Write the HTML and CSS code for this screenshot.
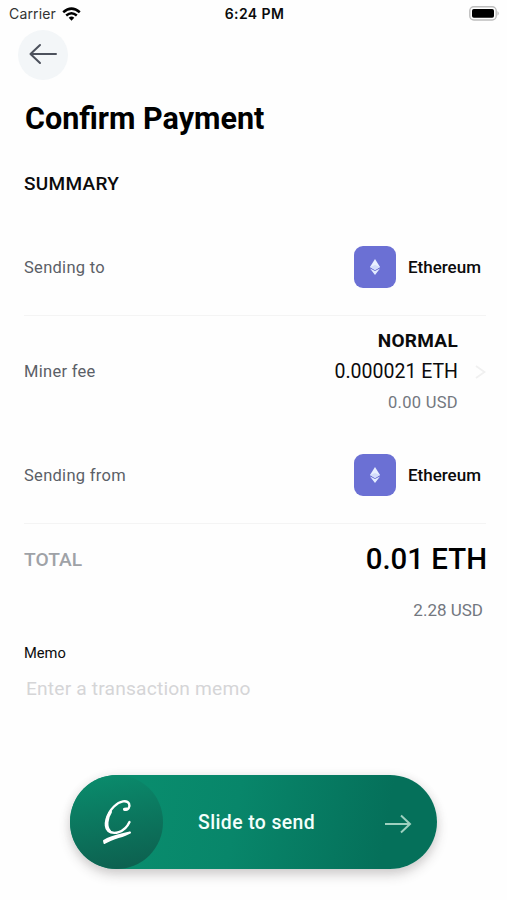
FILE: index.html
```html
<!DOCTYPE html>
<html lang="en">
<head>
<meta charset="utf-8">
<title>Confirm Payment</title>
<link rel="stylesheet" href="styles.css">
</head>
<body>
<header class="status">
  <div class="carrier"><span>Carrier</span>
    <svg class="wifi" width="19" height="14" viewBox="0 0 19 14" fill="none" stroke="#000" stroke-width="2.5"><path d="M1.2 5.2Q9.5-2 17.8 5.2M4.2 8.5Q9.5 4 14.8 8.5"/><path d="M6.7 10.7Q9.5 8.5 12.3 10.7L9.5 13.7Z" fill="#000" stroke="none"/></svg>
  </div>
  <div class="clock">6:24 PM</div>
  <svg class="battery" width="31" height="15" viewBox="0 0 31 15"><rect x=".8" y=".8" width="26.4" height="13.2" rx="4" fill="#fff" stroke="#bdbdbd" stroke-width="1.4"/><rect x="3" y="3" width="22" height="8.8" rx="1.8"/><path d="M28.5 5Q31 7.4 28.5 9.8Z" fill="#b5b5b5"/></svg>
</header>
<button class="back" aria-label="Back"><svg width="28" height="22" viewBox="0 0 28 22" fill="none" stroke="#4c515c" stroke-width="2" stroke-linecap="round" stroke-linejoin="round"><path d="M27 11H1.5M11 2L1.5 11L11 20"/></svg></button>
<main class="content">
  <h1 class="title">Confirm Payment</h1>
  <h2 class="heading">SUMMARY</h2>
  <section class="row asset-row">
    <span class="label">Sending to</span>
    <div class="asset"><span class="coin"><svg width="10" height="16" viewBox="0 0 10 16"><path d="M5 0L10 8L5 11L0 8Z" fill="#e9f0ff"/><path d="M5 6L10 8L5 11L0 8Z" fill="#d3dcfb"/><path d="M0 9.4L5 12L10 9.4L5 16Z" fill="#e3ecff"/></svg></span><span class="name">Ethereum</span></div>
  </section>
  <section class="row fee-row">
    <span class="label">Miner fee</span>
    <div class="fee"><strong class="speed">NORMAL</strong><span class="amount">0.000021 ETH</span><span class="fiat">0.00 USD</span></div>
    <svg class="chevron" width="11" height="14" viewBox="0 0 11 14" fill="none" stroke="#f0f0f0" stroke-width="1.8"><path d="M1 1L9.5 7L1 13"/></svg>
  </section>
  <section class="row asset-row">
    <span class="label">Sending from</span>
    <div class="asset"><span class="coin"><svg width="10" height="16" viewBox="0 0 10 16"><path d="M5 0L10 8L5 11L0 8Z" fill="#e9f0ff"/><path d="M5 6L10 8L5 11L0 8Z" fill="#d3dcfb"/><path d="M0 9.4L5 12L10 9.4L5 16Z" fill="#e3ecff"/></svg></span><span class="name">Ethereum</span></div>
  </section>
  <section class="total"><span class="total-label">TOTAL</span><span class="total-amount">0.01 ETH</span></section>
  <div class="total-fiat">2.28 USD</div>
  <label class="memo-label" for="memo">Memo</label>
  <input class="memo" id="memo" placeholder="Enter a transaction memo">
</main>
<div class="slider">
  <div class="knob"><svg width="30" height="46" viewBox="0 0 30 46" fill="none" stroke="#fff" stroke-linecap="round" stroke-linejoin="round"><path d="M22.5 10.500C26 11.500 28.500 8 27 4.500C25 .8 18 1.500 12 7.500C4.500 15 1.500 27 6 31.500C11 36 22.500 34 27.500 23" stroke-width="2.400"/><path d="M8.500 13C4.500 19 3.500 28 7.500 32" stroke-width="3"/><path d="M22.500 10.200L24.500 10" stroke-width="3"/><path d="M2 41.800C9 37.500 18 36 28 33.500C20 37.800 11 39 2.500 44Z" fill="#fff" stroke-width="2"/></svg></div>
  <span class="slide-text">Slide to send</span>
  <svg class="arrow" width="27" height="20" viewBox="0 0 27 20" fill="none" stroke="#9ed0bf" stroke-width="2"><path d="M0 10H25M16 1.500L25 10L16 18.500"/></svg>
</div>
</body>
</html>
```

FILE: styles.css
```css
* { box-sizing: border-box; }
body { margin: 0; width: 507px; height: 900px; overflow: hidden; background: #fefefe; color: #0b0b0c; font-family: Roboto, sans-serif; }
.status { height: 28px; display: grid; grid-template-columns: 1fr auto 1fr; align-items: center; padding: 0 7px 1px 9px; font-family: Inter, sans-serif; font-size: 14px; }
.carrier { display: flex; align-items: center; gap: 6px; color: #333; letter-spacing: .15px; }
.clock { font-weight: 600; letter-spacing: .4px; }
.battery { justify-self: end; }
.back { display: flex; align-items: center; justify-content: center; width: 50px; height: 50px; margin: 2px 0 0 18px; padding: 0 0 3px; border: 0; border-radius: 50%; background: #f3f6f8; }
.content { padding: 0 20px 0 24px; }
.title { margin: 20px 0 0 1px; font-size: 30.500px; line-height: 38px; font-weight: 700; color: #000; }
.heading { margin: 34px 0 0; font-size: 19px; line-height: 24px; font-weight: 500; letter-spacing: .3px; }
.row { display: flex; align-items: center; justify-content: space-between; width: 462px; }
.asset-row { height: 97px; border-bottom: 1px solid #f4f4f4; }
.heading + .asset-row { margin-top: 23px; }
.fee-row { height: 111px; }
.label { color: #5b6067; font-size: 16.500px; letter-spacing: .29px; }
.asset { display: flex; align-items: center; gap: 12px; padding-right: 5px; }
.coin { display: flex; align-items: center; justify-content: center; width: 42px; height: 42px; border-radius: 9px; background: #6b70d4; }
.name { font-size: 17px; font-weight: 500; }
.fee { display: flex; flex-direction: column; align-items: flex-end; margin-left: auto; line-height: 30.500px; }
.speed { font-size: 19px; font-weight: 700; letter-spacing: .3px; }
.amount { font-size: 19.500px; line-height: 31.500px; }
.fiat { font-size: 16.500px; letter-spacing: .3px; line-height: 29.500px; color: #73777f; }
.chevron { margin-left: 17px; }
.total { display: flex; align-items: center; justify-content: space-between; height: 70px; }
.total-label { color: #9fa2a7; font-size: 19.200px; font-weight: 500; }
.total-amount { font-size: 29.400px; font-weight: 500; color: #000; }
.total-fiat { margin: 6px 4px 0 0; text-align: right; font-size: 17px; line-height: 20px; color: #73777f; }
.memo-label { display: block; margin-top: 23px; font-size: 14.700px; line-height: 20px; }
.memo { display: block; width: 450px; height: 30px; margin: 10px 0 0 2px; padding: 0; border: 0; background: transparent; font: 19.200px Roboto, sans-serif; letter-spacing: .18px; }
.memo::placeholder { color: #d5d5d7; opacity: 1; }
.slider { display: flex; align-items: center; width: 367px; height: 94px; margin: 72px 0 0 70px; border-radius: 47px; background: linear-gradient(100deg, #098c6d 20%, #08866a 45%, #05705a 85%); box-shadow: 0 6px 12px rgba(60,50,50,.22), 0 0 10px rgba(80,60,60,.08); }
.knob { display: flex; align-items: center; justify-content: center; width: 93px; height: 94px; border-radius: 47px; background: linear-gradient(170deg, #0a8b6c 5%, #0d604f 95%); }
.slide-text { margin-left: 35px; color: #f3fffb; font-size: 19.400px; font-weight: 500; letter-spacing: .4px; }
.arrow { margin: 4px 25px 0 auto; }
```
